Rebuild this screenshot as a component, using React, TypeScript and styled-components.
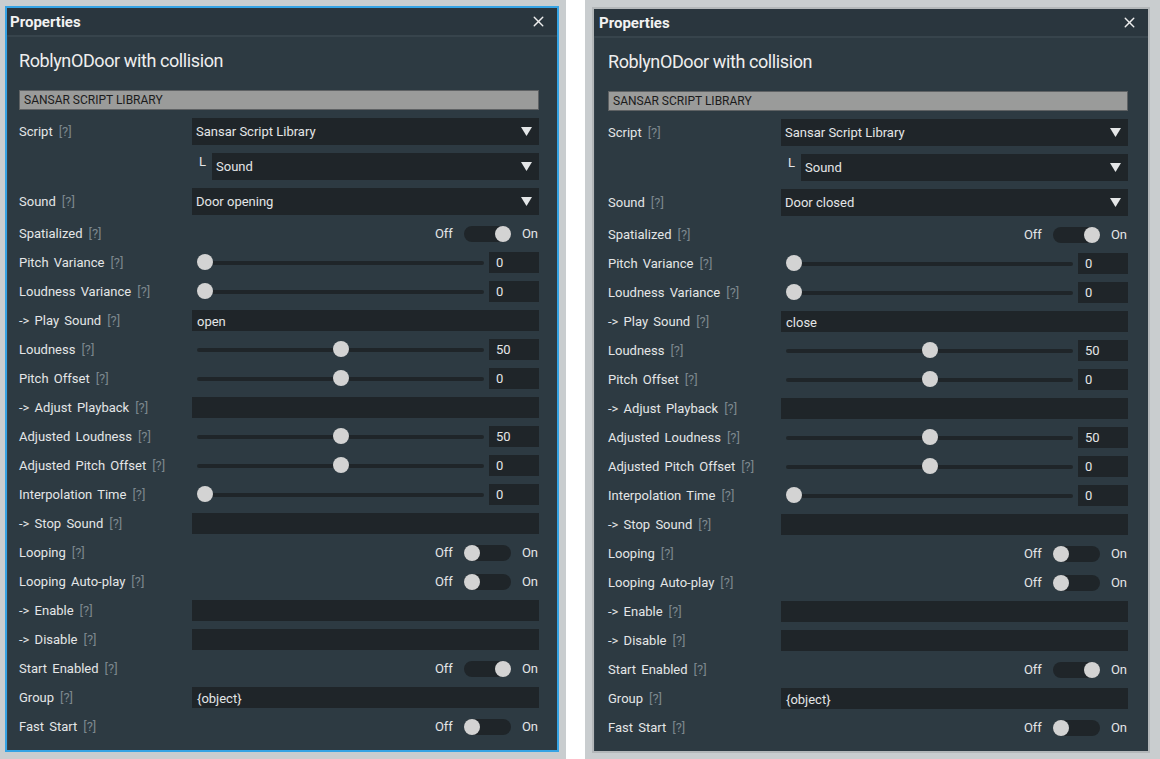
import React from "react";
import styled, { createGlobalStyle } from "styled-components";
import { X } from "lucide-react";

type Row =
  | { kind: "dropdown"; label: string; value: string }
  | { kind: "sub"; value: string }
  | { kind: "toggle"; label: string; on: boolean }
  | { kind: "slider"; label: string; pos: number; num: string }
  | { kind: "text"; label: string; value: string };

const buildRows = (sound: string, play: string): Row[] => [
  { kind: "dropdown", label: "Script", value: "Sansar Script Library" },
  { kind: "sub", value: "Sound" },
  { kind: "dropdown", label: "Sound", value: sound },
  { kind: "toggle", label: "Spatialized", on: true },
  { kind: "slider", label: "Pitch Variance", pos: 0, num: "0" },
  { kind: "slider", label: "Loudness Variance", pos: 0, num: "0" },
  { kind: "text", label: "-> Play Sound", value: play },
  { kind: "slider", label: "Loudness", pos: 50, num: "50" },
  { kind: "slider", label: "Pitch Offset", pos: 50, num: "0" },
  { kind: "text", label: "-> Adjust Playback", value: "" },
  { kind: "slider", label: "Adjusted Loudness", pos: 50, num: "50" },
  { kind: "slider", label: "Adjusted Pitch Offset", pos: 50, num: "0" },
  { kind: "slider", label: "Interpolation Time", pos: 0, num: "0" },
  { kind: "text", label: "-> Stop Sound", value: "" },
  { kind: "toggle", label: "Looping", on: false },
  { kind: "toggle", label: "Looping Auto-play", on: false },
  { kind: "text", label: "-> Enable", value: "" },
  { kind: "text", label: "-> Disable", value: "" },
  { kind: "toggle", label: "Start Enabled", on: true },
  { kind: "text", label: "Group", value: "{object}" },
  { kind: "toggle", label: "Fast Start", on: false },
];

const GlobalStyle = createGlobalStyle`
  html, body {
    margin: 0;
    padding: 0;
    background: #ffffff;
  }
  body {
    font-family: Roboto, "Liberation Sans", sans-serif;
  }
`;

const Page = styled.div`
  display: flex;
  gap: 19px;
  width: 1160px;
  height: 759px;
  overflow: hidden;
`;

const Shot = styled.div<{ $w: number; $left: number; $top: number }>`
  width: ${(p) => p.$w}px;
  height: 759px;
  box-sizing: border-box;
  padding: ${(p) => p.$top}px 0 0 ${(p) => p.$left}px;
  background: #c9cdcf;
`;

const Window = styled.div<{ $border: string; $w: number; $h: number }>`
  width: ${(p) => p.$w}px;
  height: ${(p) => p.$h}px;
  box-sizing: border-box;
  border: 2px solid ${(p) => p.$border};
  background: #2d3a42;
  display: flex;
  flex-direction: column;
`;

const TitleBar = styled.div<{ $inset: number }>`
  height: 27px;
  flex: none;
  display: flex;
  align-items: center;
  justify-content: space-between;
  padding: 0 10px 0 ${(p) => 3 + p.$inset}px;
  background: #2a363e;
  border-bottom: 2px solid #37444c;
  color: #f2f2f2;
  font-size: 15px;
  font-weight: 700;
`;

const CloseBtn = styled.span`
  display: flex;
  color: #eeeeee;
`;

const Body = styled.div<{ $inset: number }>`
  flex: 1;
  padding: 12px 0 0 ${(p) => 11 + p.$inset}px;
  border-left: 1px solid #34414a;
`;

const Content = styled.div`
  width: 520px;
  display: flex;
  flex-direction: column;
`;

const ObjectName = styled.div`
  height: 24px;
  line-height: 24px;
  font-size: 18px;
  color: #eeeeee;
  letter-spacing: -0.4px;
`;

const SectionBar = styled.div`
  margin-top: 17px;
  height: 20px;
  box-sizing: border-box;
  border: 1px solid #5f6264;
  background: #9a9b9a;
  color: #1c1c1c;
  font-size: 12px;
  line-height: 18px;
  padding-left: 4px;
`;

const Rows = styled.div`
  margin-top: 8px;
  display: flex;
  flex-direction: column;
  gap: 8px;
`;

const RowGrid = styled.div<{ $tall?: boolean }>`
  display: grid;
  grid-template-columns: 173px 1fr;
  align-items: center;
  height: ${(p) => (p.$tall ? 27 : 21)}px;
`;

const SubGrid = styled.div`
  display: grid;
  grid-template-columns: 173px 20px 1fr;
  height: 27px;
`;

const Label = styled.div`
  color: #e4e6e7;
  font-size: 13px;
  word-spacing: 2px;
  white-space: nowrap;
`;

const Help = styled.span`
  color: #7c878d;
  margin-left: 6px;
`;

const Field = styled.div<{ $tall?: boolean }>`
  height: ${(p) => (p.$tall ? 27 : 21)}px;
  box-sizing: border-box;
  background: #1f2529;
  color: #e4e6e7;
  font-size: 13px;
  display: flex;
  align-items: center;
  justify-content: space-between;
  padding: ${(p) => (p.$tall ? "0 7px 0 4px" : "2px 4px 0 5px")};
`;

const SubMark = styled.div`
  color: #e4e6e7;
  font-size: 13px;
  padding: 1px 0 0 7px;
`;

const SliderWrap = styled.div`
  display: flex;
  align-items: center;
  gap: 5px;
  padding-left: 5px;
  height: 21px;
`;

const Track = styled.div`
  position: relative;
  flex: 1;
  height: 21px;
  display: flex;
  align-items: center;
`;

const TrackLine = styled.div`
  width: 100%;
  height: 4px;
  border-radius: 2px;
  background: #1f2529;
`;

const Thumb = styled.div<{ $pos: number }>`
  position: absolute;
  top: 2px;
  left: calc((100% - 16px) * ${(p) => p.$pos / 100});
  width: 16px;
  height: 16px;
  border-radius: 50%;
  background: #d3d3d3;
`;

const NumBox = styled.div`
  width: 50px;
  height: 21px;
  box-sizing: border-box;
  background: #1f2529;
  color: #e4e6e7;
  font-size: 13px;
  padding: 3px 0 0 7px;
`;

const ToggleWrap = styled.div`
  display: flex;
  align-items: center;
  justify-content: flex-end;
  gap: 11px;
  padding-right: 1px;
  color: #e4e6e7;
  font-size: 13px;
`;

const Switch = styled.div<{ $on: boolean }>`
  position: relative;
  width: 47px;
  height: 16px;
  border-radius: 8px;
  background: #1f2529;
  &::after {
    content: "";
    position: absolute;
    top: 0;
    ${(p) => (p.$on ? "right: 0;" : "left: 0;")}
    width: 16px;
    height: 16px;
    border-radius: 50%;
    background: #d3d3d3;
  }
`;

const Arrow = () => (
  <svg width="11" height="9" viewBox="0 0 11 9">
    <path d="M0 0 H11 L5.5 9 Z" fill="#e4e6e7" />
  </svg>
);

const PropLabel = ({ text }: { text: string }) => (
  <Label>
    {text}
    <Help>[?]</Help>
  </Label>
);

const PropRow = ({ row }: { row: Row }) => {
  switch (row.kind) {
    case "dropdown":
      return (
        <RowGrid $tall>
          <PropLabel text={row.label} />
          <Field $tall>
            <span>{row.value}</span>
            <Arrow />
          </Field>
        </RowGrid>
      );
    case "sub":
      return (
        <SubGrid>
          <div />
          <SubMark>L</SubMark>
          <Field $tall>
            <span>{row.value}</span>
            <Arrow />
          </Field>
        </SubGrid>
      );
    case "toggle":
      return (
        <RowGrid>
          <PropLabel text={row.label} />
          <ToggleWrap>
            <span>Off</span>
            <Switch $on={row.on} />
            <span>On</span>
          </ToggleWrap>
        </RowGrid>
      );
    case "slider":
      return (
        <RowGrid>
          <PropLabel text={row.label} />
          <SliderWrap>
            <Track>
              <TrackLine />
              <Thumb $pos={row.pos} />
            </Track>
            <NumBox>{row.num}</NumBox>
          </SliderWrap>
        </RowGrid>
      );
    default:
      return (
        <RowGrid>
          <PropLabel text={row.label} />
          <Field>{row.value}</Field>
        </RowGrid>
      );
  }
};

const PropertiesWindow = ({
  border,
  w,
  h,
  inset,
  rows,
}: {
  border: string;
  w: number;
  h: number;
  inset: number;
  rows: Row[];
}) => (
  <Window $border={border} $w={w} $h={h}>
    <TitleBar $inset={inset}>
      <span>Properties</span>
      <CloseBtn>
        <X size={17} strokeWidth={2} />
      </CloseBtn>
    </TitleBar>
    <Body $inset={inset}>
      <Content>
        <ObjectName>RoblynODoor with collision</ObjectName>
        <SectionBar>SANSAR SCRIPT LIBRARY</SectionBar>
        <Rows>
          {rows.map((r, i) => (
            <PropRow key={i} row={r} />
          ))}
        </Rows>
      </Content>
    </Body>
  </Window>
);

export default function App() {
  return (
    <>
      <GlobalStyle />
      <Page>
        <Shot $w={566} $left={5} $top={6}>
          <PropertiesWindow
            border="#35a3e4"
            w={554}
            h={746}
            inset={0}
            rows={buildRows("Door opening", "open")}
          />
        </Shot>
        <Shot $w={575} $left={7} $top={7}>
          <PropertiesWindow
            border="#b3b7b9"
            w={558}
            h={746}
            inset={2}
            rows={buildRows("Door closed", "close")}
          />
        </Shot>
      </Page>
    </>
  );
}
